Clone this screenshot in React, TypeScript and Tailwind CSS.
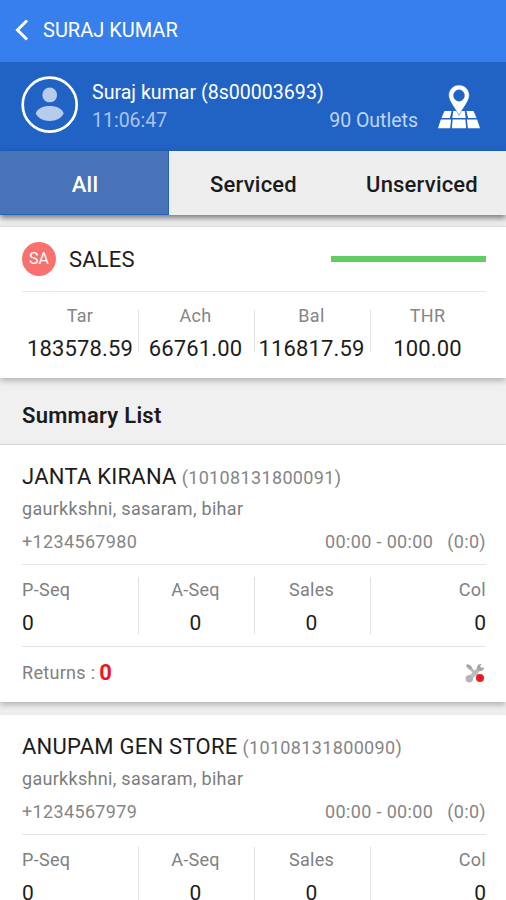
interface Outlet {
  name: string;
  code: string;
  address: string;
  phone: string;
  time: string;
  duration: string;
  returns: number;
}

const outlets: Outlet[] = [
  {
    name: "JANTA KIRANA",
    code: "(10108131800091)",
    address: "gaurkkshni, sasaram, bihar",
    phone: "+1234567980",
    time: "00:00 - 00:00",
    duration: "(0:0)",
    returns: 0,
  },
  {
    name: "ANUPAM GEN STORE",
    code: "(10108131800090)",
    address: "gaurkkshni, sasaram, bihar",
    phone: "+1234567979",
    time: "00:00 - 00:00",
    duration: "(0:0)",
    returns: 0,
  },
];

const totals = [
  { label: "Tar", value: "183578.59" },
  { label: "Ach", value: "66761.00" },
  { label: "Bal", value: "116817.59" },
  { label: "THR", value: "100.00" },
];

const sequence = [
  { label: "P-Seq", value: "0", align: "items-start" },
  { label: "A-Seq", value: "0", align: "items-center pr-0.5" },
  { label: "Sales", value: "0", align: "items-center pr-0.5" },
  { label: "Col", value: "0", align: "items-end" },
];

function UserIcon() {
  return (
    <svg className="w-[58px] h-[58px]" viewBox="0 0 58 58">
      <circle cx="28.700" cy="28.700" r="27" fill="none" stroke="#fff" strokeWidth="2.7" />
      <circle cx="28.700" cy="18.900" r="7.4" fill="#b7cbed" />
      <path d="M14.700 37.500C16.200 32.500 21.700 30 28.700 30S41.200 32.500 42.700 37.500C40.700 42 35.200 45 28.700 45S16.700 42 14.700 37.500Z" fill="#b7cbed" />
    </svg>
  );
}

function MapIcon() {
  return (
    <svg className="w-[42px] h-[44px]" viewBox="0 0 44 44" preserveAspectRatio="none" fill="#fff">
      <path d="M6.800 26H14.300L12.400 33H3.600Z" />
      <path d="M16 26H28L29 33H15Z" />
      <path d="M29.700 26H37.200L40.400 33H31.600Z" />
      <path d="M3 34.600H13.700L12.700 43.200H0Z" />
      <path d="M15.300 34.600H28.700L29.500 43.200H14.500Z" />
      <path d="M30.300 34.600H41L44 43.200H31.300Z" />
      <path
        d="M22 0C16 0 11.200 4.600 11.200 10.300C11.200 16 17.500 22.300 22 30.500C26.500 22.300 32.800 16 32.800 10.300C32.800 4.600 28 0 22 0ZM22 4.800A5.700 5.700 0 1 1 22 16.200A5.700 5.700 0 1 1 22 4.800Z"
        fillRule="evenodd"
        stroke="#2163c4"
        strokeWidth="0.500"
      />
    </svg>
  );
}

function ToolsIcon() {
  return (
    <svg className="w-5 h-5" viewBox="0 0 20 20" fill="none">
      <path d="M4 4L15 15" stroke="#bcbcc0" strokeWidth="3" />
      <path d="M2.300 1L5.800 2.600L7.200 5.800L4.600 6.400L1 3.300" fill="#a5a5a9" />
      <path d="M14.500 5.500L5 15" stroke="#bcbcc0" strokeWidth="4" strokeLinecap="round" />
      <circle cx="4.300" cy="15.700" r="3.700" fill="#b5b5b8" />
      <path d="M16.500 1.200A3.500 3.500 0 1 0 19 4.200L16.300 5L14.800 3.600Z" fill="#a5a5a9" />
      <circle cx="15" cy="15" r="4" fill="#ef1c25" />
      <path d="M15 13V15L16.500 15.500" stroke="#a80e17" strokeWidth="0.800" />
    </svg>
  );
}

function OutletCard({ outlet }: { outlet: Outlet }) {
  return (
    <section className="h-[257px] shrink-0 bg-white pl-[22px] pr-5 pt-[18px] shadow-[0_3px_6px_rgba(0,0,0,0.25)]">
      <div className="flex h-7 items-baseline whitespace-nowrap">
        <h2 className="text-[22px] leading-7 tracking-[0.25px] text-[#1c1c1c]">{outlet.name}</h2>
        <span className="ml-[5px] text-[18px] leading-7 tracking-[0.35px] text-[#858585]">{outlet.code}</span>
      </div>
      <p className="mt-1 h-7 text-[18px] leading-7 tracking-[0.3px] text-[#7c7c7c]">{outlet.address}</p>
      <div className="mt-[5px] flex h-7 text-[18px] leading-7 tracking-[0.35px] text-[#858585]">
        <span>{outlet.phone}</span>
        <span className="ml-auto">{outlet.time}</span>
        <span className="ml-[14px]">{outlet.duration}</span>
      </div>

      {/* Sequence figures */}
      <div className="mt-[8px] flex h-[83px] border-y border-[#e4e4e4] pt-3">
        {sequence.map((item) => (
          <div
            key={item.label}
            className={`flex h-[57px] w-[116px] flex-col not-first:border-l not-first:border-[#e0e0e0] ${item.align}`}
          >
            <span className="text-[18px] leading-[26px] tracking-[0.3px] text-[#808080]">{item.label}</span>
            <span className="mt-[7px] text-[21px] leading-[26px] text-[#1c1c1c]">{item.value}</span>
          </div>
        ))}
      </div>

      <div className="flex h-[50px] items-center text-[18px] tracking-[0.3px] text-[#808080]">
        Returns : <span className="ml-[4px] text-[22px] font-bold text-[#f0141c]">{outlet.returns}</span>
        <span className="ml-auto mr-px pt-[2px]">
          <ToolsIcon />
        </span>
      </div>
    </section>
  );
}

export default function App() {
  return (
    <div className="flex h-[900px] w-[506px] flex-col overflow-hidden bg-[#f0f0f0] font-['Roboto',sans-serif]">
      {/* Top bar */}
      <header className="flex h-[62px] shrink-0 items-center bg-[#377fed] pl-[15px] pb-[2px] text-white">
        <svg className="h-[22px] w-[14px]" viewBox="0 0 14 22" fill="none" stroke="#fff" strokeWidth="3">
          <path d="M12 1.500L2.500 11L12 20.500" />
        </svg>
        <h1 className="ml-[14px] text-[20px]">SURAJ KUMAR</h1>
      </header>

      {/* Salesman */}
      <div className="flex h-[89px] shrink-0 items-start bg-[#2163c4] pl-[21px] pt-[14px]">
        <UserIcon />
        <div className="ml-[13px] w-[326px]">
          <p className="mt-[3px] text-[19.6px] leading-7 text-white">Suraj kumar (8s00003693)</p>
          <div className="flex justify-between text-[19.5px] leading-7 text-[#a9c5ef]">
            <span>11:06:47</span>
            <span className="text-[#c0d4f3]">90 Outlets</span>
          </div>
        </div>
        <span className="ml-[20px] mt-[9px]">
          <MapIcon />
        </span>
      </div>

      {/* Tabs */}
      <nav className="relative z-10 flex h-[64px] shrink-0 bg-[#eeeeee] text-[22px] font-medium tracking-[0.2px] text-[#1b1b1b] shadow-[0_3px_6px_rgba(0,0,0,0.5)]">
        <button className="w-[169px] border-r border-b border-[#2463bd] bg-[#4873b8] pt-1 pl-0.5 text-white">All</button>
        <button className="w-[169px] pt-[3px]">Serviced</button>
        <button className="w-[168px] pt-[3px]">Unserviced</button>
      </nav>

      {/* Sales totals */}
      <section className="mt-[11px] h-[152px] shrink-0 border-t border-[#e0e0e0] bg-white pl-[22px] pr-5 shadow-[0_3px_6px_rgba(0,0,0,0.25)]">
        <div className="flex h-[65px] items-center border-b border-[#e8e8e8]">
          <span className="flex h-[34px] w-[34px] items-center justify-center rounded-full bg-[#f8716f] text-[16px] text-white">
            SA
          </span>
          <span className="ml-[13px] text-[22px] tracking-[0.2px] text-[#1c1c1c]">SALES</span>
          <span className="ml-auto h-[6px] w-[155px] bg-[#61cb64]" />
        </div>
        <div className="mt-[18px] flex">
          {totals.map((item) => (
            <div
              key={item.label}
              className="flex h-[42px] w-[116px] flex-col items-center whitespace-nowrap not-first:border-l not-first:border-[#e0e0e0] not-first:pr-0.5"
            >
              <span className="-mt-[7px] text-[18px] leading-[26px] tracking-[0.3px] text-[#858585]">{item.label}</span>
              <span className="mt-[7px] text-[22px] leading-[26px] tracking-[0.15px] text-[#1c1c1c]">{item.value}</span>
            </div>
          ))}
        </div>
      </section>

      <h2 className="flex h-[66px] shrink-0 items-center pl-[22px] pt-[8px] text-[22px] font-semibold tracking-[0.25px] text-[#1b1b1b]">
        Summary List
      </h2>

      <main className="flex flex-col gap-[13px] border-t border-[#dedede]">
        {outlets.map((outlet) => (
          <OutletCard key={outlet.code} outlet={outlet} />
        ))}
      </main>
    </div>
  );
}
